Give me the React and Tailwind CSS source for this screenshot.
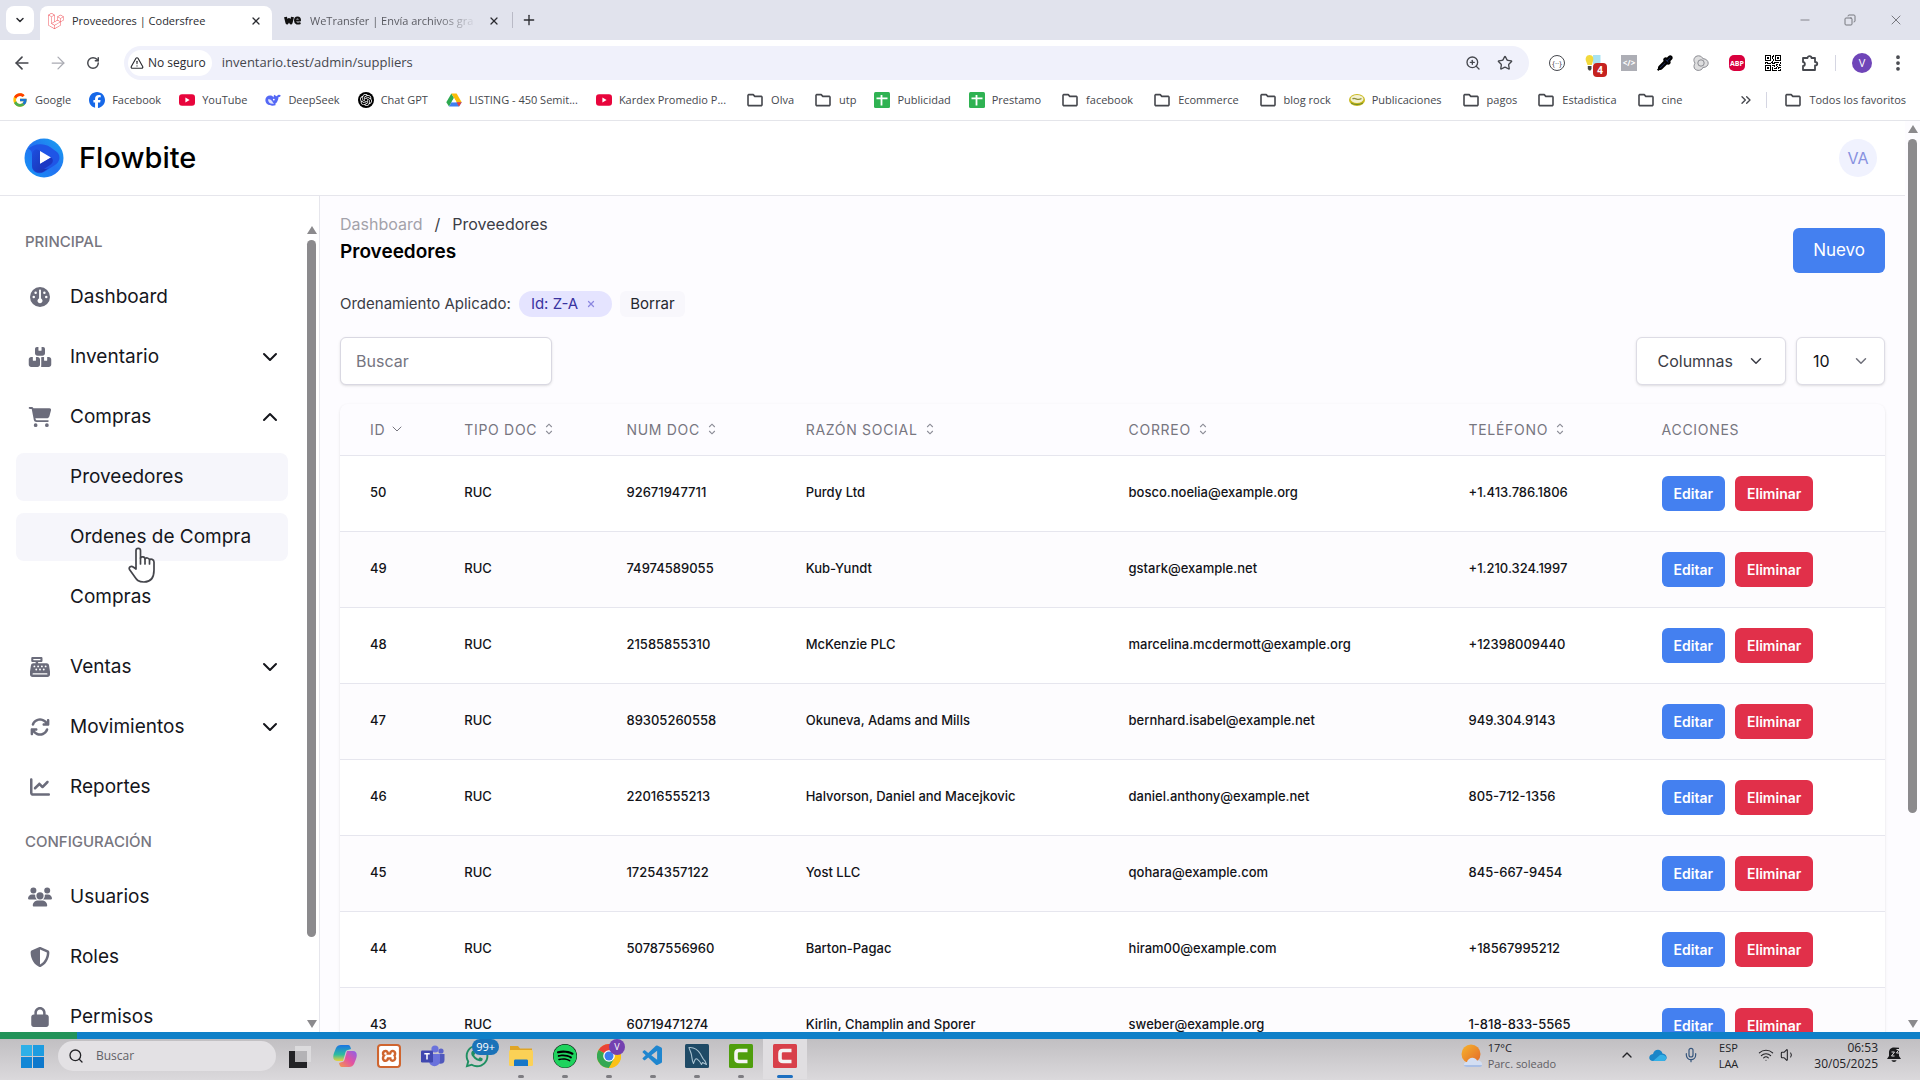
import React from "react";
import {
  FaGauge, FaBoxesStacked, FaCartShopping, FaCashRegister, FaArrowsRotate, FaChartLine,
  FaUsers, FaShieldHalved, FaLock, FaLaravel, FaFacebook, FaSpotify, FaWhatsapp,
} from "react-icons/fa6";
import { FcGoogle } from "react-icons/fc";
import { SiOpenai, SiXampp } from "react-icons/si";
import { BsQrCode } from "react-icons/bs";
import { VscVscode } from "react-icons/vsc";
import {
  ArrowLeft, ArrowRight, RotateCw, X, Plus, ChevronDown, ChevronUp, ChevronsRight, Star, ZoomIn,
  TriangleAlert, EllipsisVertical, Search, Wifi, Volume1, Mic, Pipette, Minus, Copy,
} from "lucide-react";

/* ---------- small drawings ---------- */

const Folder = () => (
  <svg viewBox="0 0 16 16" className="h-4 w-4 shrink-0" fill="none" stroke="#45474d" strokeWidth="1.6" strokeLinejoin="round">
    <path d="M1 3.2 L1.6 2.6 H6.2 L7.8 4.4 H14.4 L15 5 V13 L14.4 13.6 H1.6 L1 13 Z" />
  </svg>
);

const YouTube = () => (
  <svg viewBox="0 0 16 16" className="h-4 w-4 shrink-0">
    <rect x="0" y="2.2" width="16" height="11.6" rx="3" fill="#e8053c" />
    <path d="M6.4 5.6 L10.6 8 L6.4 10.4 Z" fill="#fff" />
  </svg>
);

const DeepSeek = () => (
  <svg viewBox="0 0 16 16" className="h-4 w-4 shrink-0">
    <path
      d="M15.8 3.4c-.5 1-1.2 1.5-2.2 1.5-.3 3.4-1.6 5.6-3.6 7.2l1 .8c-4 1.7-9.6.4-10.5-3.7C-.3 5.5 2.6 3 6 3.6c1 .2 2 .9 2.7 1.8-.2-1.2.1-1.9.9-2.6.6.9 1.3 1.3 2.3 1.4.9-1.3 2.2-1.8 3.9-.8Z"
      fill="#5468f5"
    />
    <path d="M3 7.4c1.8-.7 3.6.4 4.4 2.2.4 1 .9 1.5 1.6 1.8-2.7 1.100-5.900-.7-6-4Z" fill="#dfe4ff" />
    <circle cx="8.8" cy="7.6" r=".9" fill="#fff" />
  </svg>
);

const Drive = () => (
  <svg viewBox="0 0 16 16" className="h-4 w-4 shrink-0">
    <path d="M5.4 1.5 L8 6 L3 14.5 L.3 10.2 Z" fill="#2ca94f" />
    <path d="M5.4 1.5 H10.6 L15.7 10.2 H10.5 Z" fill="#fbbc05" />
    <path d="M3 14.5 L5.5 10.2 H15.7 L13 14.5 Z" fill="#3f7ff0" />
    <path d="M10.5 10.2 H15.7 L13 14.5 Z" fill="#ea4335" />
    <path d="M8 6 L10.5 10.2 H5.5 Z" fill="#fff" />
  </svg>
);

const Sheets = () => (
  <svg viewBox="0 0 16 16" className="h-4 w-4 shrink-0">
    <rect width="16" height="16" rx="1.5" fill="#2fb252" />
    <path d="M7.5 3 V13.5 M2.5 6.3 H13.5" stroke="#fff" strokeWidth="1.8" />
  </svg>
);

const Publi = () => (
  <svg viewBox="0 0 16 16" className="h-4 w-4 shrink-0">
    <ellipse cx="8" cy="8" rx="8" ry="6" fill="#c9b91e" />
    <ellipse cx="8" cy="7" rx="6.5" ry="4" fill="#f4f1d2" />
    <path d="M3.5 7 C6 4.5 8 9.5 12.5 6.5" stroke="#8d8f3a" strokeWidth="1.3" fill="none" />
    <path d="M2 11 C5 13 11 13 14 11" stroke="#6d8a2a" strokeWidth="1" fill="none" />
  </svg>
);

const Logo = () => (
  <svg viewBox="0 0 40 40" className="h-10 w-10">
    <defs>
      <linearGradient id="lg" x1="0" y1="1" x2="1" y2="0">
        <stop offset="0" stopColor="#1598f5" />
        <stop offset=".5" stopColor="#2372f2" />
        <stop offset="1" stopColor="#18a5f0" />
      </linearGradient>
      <linearGradient id="lg2" x1="0" y1="0" x2="1" y2="1">
        <stop offset="0" stopColor="#1c4fe0" />
        <stop offset="1" stopColor="#1a2fae" />
      </linearGradient>
    </defs>
    <circle cx="20" cy="20" r="19.5" fill="url(#lg)" />
    <path d="M4 11 C10 5 20 5 26 9 L33 14 C37 18 36 24 31 27 L20 34 C14 37 8 34 8 28 V16 C8 13 6 11 4 11 Z" fill="#1f55e6" />
    <path d="M8 18 C8 12 12 10 16 13 V26 C16 31 21 32 25 30 L19 34 C13 36 8 33 8 27 Z" fill="url(#lg2)" />
    <path d="M16 13 L27 19.5 L16 26 Z" fill="#fff" />
    <path d="M16 26 L27 19.5 C30 21.5 29 25 26 27 L20 31 C17 31 16 29 16 26 Z" fill="#1b38c4" />
  </svg>
);

const SortBoth = () => (
  <svg viewBox="0 0 10 14" className="h-3 w-2" fill="none" stroke="#8b8c96" strokeWidth="1.4">
    <path d="M1.5 4.5 L5 1 L8.5 4.5 M1.5 9.5 L5 13 L8.5 9.5" />
  </svg>
);

const Hand = () => (
  <svg viewBox="0 0 28 36" className="h-9 w-7" fill="#fff" stroke="#44454b" strokeWidth="1.7" strokeLinejoin="round" strokeLinecap="round">
    <path d="M8 22 V3.5 C8 .6 12.5 .6 12.5 3.5 V11 C13 9.2 17 9.4 17 12 C17.6 10.4 21.3 10.6 21.5 13 C22.5 11.6 26 12.2 26 15 V23 C26 31 22 35 16 35 C10 35 8.5 32.5 6.5 29.5 L1.5 22.5 C.4 20 3.2 18.3 5.2 20 L8 22 Z" />
    <path d="M12.5 11 V17 M17 12 V17 M21.5 13.5 V17" fill="none" />
  </svg>
);

const Chrome = () => (
  <svg viewBox="0 0 24 24" className="h-6 w-6">
    <circle cx="12" cy="12" r="12" fill="#fbc116" />
    <path d="M12 12 L1.6 6 A12 12 0 0 1 22.4 6 Z" fill="#ea4335" />
    <path d="M12 12 L1.6 6 A12 12 0 0 0 12 24 L17 15 Z" fill="#34a853" />
    <path d="M12 12 L22.4 6 A12 12 0 0 1 12 24 L17 15 Z" fill="#fbc116" />
    <circle cx="12" cy="12" r="5.8" fill="#fff" />
    <circle cx="12" cy="12" r="4.5" fill="#3c7df0" />
  </svg>
);

const Copilot = () => (
  <svg viewBox="0 0 24 24" className="h-6 w-6">
    <defs>
      <linearGradient id="cp1" x1="0" y1="0" x2="0" y2="1">
        <stop offset="0" stopColor="#1b74e4" />
        <stop offset=".6" stopColor="#2dbca0" />
        <stop offset="1" stopColor="#e8d23a" />
      </linearGradient>
      <linearGradient id="cp2" x1="1" y1="0" x2="0" y2="1">
        <stop offset="0" stopColor="#8a62ea" />
        <stop offset=".5" stopColor="#e352a0" />
        <stop offset="1" stopColor="#f49a4a" />
      </linearGradient>
    </defs>
    <path d="M8 1 H15 C17 1 17.5 3 18 5 L15 6 C13 6 12.5 8 12 10 L10 17 H4 C0 17 -.5 13 1 9 L3 4 C4 2 5.5 1 8 1 Z" fill="url(#cp1)" />
    <path d="M16 23 H9 C7 23 6.5 21 6 19 L9 18 C11 18 11.5 16 12 14 L14 7 H20 C24 7 24.5 11 23 15 L21 20 C20 22 18.5 23 16 23 Z" fill="url(#cp2)" />
  </svg>
);

const Teams = () => (
  <svg viewBox="0 0 24 24" className="h-6 w-6">
    <circle cx="20" cy="7" r="2.6" fill="#5b62c8" />
    <circle cx="14" cy="5" r="3.6" fill="#6a72dc" />
    <path d="M17 10 H23.5 V16 C23.5 20 19 20.5 17 19 Z" fill="#5058bc" />
    <path d="M8 10 H19 V16.5 C19 24 8 24 8 16.5 Z" fill="#6a72dc" />
    <rect x="0" y="6.5" width="12" height="12" rx="1.2" fill="#4048b0" />
    <path d="M3.3 9.8 H8.7 M6 9.8 V15.5" stroke="#fff" strokeWidth="1.5" />
  </svg>
);

const Explorer = () => (
  <svg viewBox="0 0 24 24" className="h-6 w-6">
    <path d="M1 2 H9 L11 4.5 H23 V12 H1 Z" fill="#e0a526" />
    <rect x="0" y="6" width="24" height="16" rx="1.5" fill="#fbd156" />
    <path d="M5 22 V17 C5 16 5.5 15.5 6.5 15.5 H17.5 C18.5 15.5 19 16 19 17 V22 Z" fill="#1777c8" />
  </svg>
);

const CamC = ({ color }) => (
  <svg viewBox="0 0 24 24" className="h-6 w-6">
    <rect width="24" height="24" rx="1.5" fill={color} />
    <path d="M18.5 6.5 H10 C7.5 6.5 7 7.5 7 9.5 V14.5 C7 16.5 7.5 17.5 10 17.5 H18.5" stroke="#f4f4f4" strokeWidth="3.6" fill="none" />
  </svg>
);

const TaskView = () => (
  <svg viewBox="0 0 24 24" className="h-6 w-6">
    <rect x="8" y="1" width="16" height="16" fill="#dcdbdd" />
    <path d="M2 6 H8 V17 H20 V23 H2 Z" fill="#232326" />
    <rect x="8" y="6" width="12" height="11" fill="#b4b3b6" />
  </svg>
);

const Weather = () => (
  <svg viewBox="0 0 24 24" className="h-6 w-6">
    <defs>
      <linearGradient id="sun" x1="0" y1="0" x2="1" y2="1">
        <stop offset="0" stopColor="#f7b42c" />
        <stop offset="1" stopColor="#e2682a" />
      </linearGradient>
    </defs>
    <circle cx="11" cy="10" r="9.5" fill="url(#sun)" />
    <path d="M7 23 C3 23 3 18 7 18 C8 13 15 12 17 16.5 C22 15.5 24 22 20 23 Z" fill="#d3def2" />
    <path d="M7 23 C5 23 4 22 4 21 H22 C22 22 21 23 20 23 Z" fill="#a9bfe6" />
  </svg>
);

const Bell = () => (
  <svg viewBox="0 0 16 16" className="h-4 w-4">
    <path d="M8 .5 C4.5 .5 3 3 3 5.5 V9 L1 12 H15 L13 9 V.8 Z" fill="#1a1a1c" />
    <path d="M5.5 13.2 H10.5 C10 15.5 6 15.5 5.5 13.2 Z" fill="#1a1a1c" />
    <path d="M5.5 5 H8.5 L5.5 9 H8.5 M10.5 2.5 H13 L10.5 6 H13" stroke="#dcdadd" strokeWidth="1" fill="none" />
  </svg>
);

const Dolphin = () => (
  <svg viewBox="0 0 24 24" className="h-6 w-6">
    <rect width="24" height="24" rx="1.5" fill="#1f4a66" />
    <path
      d="M4 3.5 C9 3 13 6 15.5 10 C17 12.5 17.5 15 20 17 L21.5 20.5 L17.5 18.5 L16.5 20.5 C15 17 14 16.5 12 15 C10 14 9.5 17 8.5 19.5 C7 17 7 14 6.5 11 C6 8 4.5 6 4 3.5 Z"
      fill="none" stroke="#a9c2d0" strokeWidth="1.1" strokeLinejoin="round"
    />
  </svg>
);

/* ---------- browser chrome ---------- */

function TabStrip() {
  return (
    <div className="flex h-10 shrink-0 items-end bg-[#e1e3ed] text-[11px] text-[#2b2c31]">
      <button aria-label="Buscar pestañas" className="mr-1.5 mb-1.5 ml-1.5 grid h-7 w-7 place-items-center rounded-lg bg-white">
        <ChevronDown className="h-3 w-3" strokeWidth={3} />
      </button>
      <div className="flex h-[34px] w-[232px] items-center gap-2 rounded-t-lg bg-white px-2 pb-1">
        <FaLaravel className="h-4 w-4 text-[#f0525a]" />
        <span className="flex-1 truncate">Proveedores | Codersfree</span>
        <button aria-label="Cerrar Proveedores" className="px-0.5"><X className="h-3 w-3" strokeWidth={2.5} /></button>
      </div>
      <div className="flex h-[34px] w-[240px] items-center gap-2 pr-2.5 pb-1 pl-3">
        <svg viewBox="0 0 18 12" className="h-3 w-[18px]" fill="none" stroke="#111" strokeLinejoin="round">
          <path d="M1.5 2 L3 8 L5 4.5 L7 8 L8.5 2" strokeWidth="3" />
          <path d="M11 5.5 H16 C16 1.5 11 1.5 11 5.5 C11 9 14 9 16.5 8" strokeWidth="2" />
        </svg>
        <span className="flex-1 bg-gradient-to-r from-[#55565d] from-75% to-transparent bg-clip-text whitespace-nowrap text-transparent">
          WeTransfer | Envía archivos gra
        </span>
        <button aria-label="Cerrar WeTransfer" className="px-0.5"><X className="h-3 w-3" strokeWidth={2.5} /></button>
      </div>
      <div className="mb-3 h-4 w-px bg-[#b9bac6]" />
      <button aria-label="Nueva pestaña" className="mb-3 ml-2"><Plus className="h-4 w-4" /></button>
      <div className="mr-4 mb-3 ml-auto flex items-center gap-8 text-[#77787f]">
        <button aria-label="Minimizar"><Minus className="h-3.5 w-3.5" strokeWidth={1.5} /></button>
        <button aria-label="Restaurar"><Copy className="h-3 w-3 -scale-x-100" strokeWidth={2} /></button>
        <button aria-label="Cerrar"><X className="h-4 w-4" strokeWidth={1.5} /></button>
      </div>
    </div>
  );
}

function Toolbar() {
  return (
    <div className="flex h-[46px] shrink-0 items-center bg-white px-3 text-[#45474d]">
      <div className="flex w-28 items-center gap-4">
        <button aria-label="Atrás"><ArrowLeft className="h-5 w-5" strokeWidth={2} /></button>
        <button aria-label="Adelante" className="text-[#a9aab2]"><ArrowRight className="h-5 w-5" strokeWidth={1.5} /></button>
        <button aria-label="Recargar" className="pl-0.5"><RotateCw className="h-3.5 w-3.5" strokeWidth={2.5} /></button>
      </div>
      <div className="flex h-[34px] flex-1 items-center rounded-full bg-[#f0f1fb] px-1">
        <button className="flex h-[26px] items-center gap-1 rounded-full bg-white pr-1.5 pl-0.5 text-xs font-medium text-[#2b2c31]">
          <TriangleAlert className="h-3.5 w-3.5" strokeWidth={2} />
          No seguro
        </button>
        <input aria-label="Dirección" defaultValue="inventario.test/admin/suppliers" className="ml-2.5 min-w-0 flex-1 bg-transparent text-[13px] outline-none" />
        <div className="flex gap-4 pr-3">
          <button aria-label="Zoom"><ZoomIn className="h-4 w-4" /></button>
          <button aria-label="Añadir a favoritos"><Star className="h-4 w-4" /></button>
        </div>
      </div>
      <div className="flex items-center gap-5 pl-5">
        <button aria-label="JSON" className="grid h-4 w-4 place-items-center rounded-full border border-[#45474d] text-[8px] leading-none">{"{··}"}</button>
        <button aria-label="Lighthouse" className="relative h-4 w-4">
          <svg viewBox="0 0 16 16" className="h-4 w-4">
            <path d="M8 0 H15.5 V9 H8 Z" fill="#a8e2f2" />
            <path d="M4.5 0 C8 0 9 3 8 6 L6.8 10 H2.5 L1 6 C0 3 1.5 0 4.5 0 Z" fill="#f2d93c" />
            <path d="M2.8 11 H6.5 V14 L5.5 15.5 H4 L2.8 14 Z" fill="#444" />
          </svg>
          <span className="absolute top-2 left-2 grid h-3.5 w-3.5 place-items-center rounded-sm bg-[#c5221f] text-[10px] leading-none font-bold text-white">4</span>
        </button>
        <button aria-label="Código" className="grid h-4 w-4 place-items-center bg-[#adaeb5] text-[8px] font-bold text-white">&lt;/&gt;</button>
        <button aria-label="Cuentagotas"><Pipette className="h-4 w-4 fill-[#1c2a5a] text-black" strokeWidth={3} /></button>
        <button aria-label="Colores">
          <svg viewBox="0 0 16 16" className="h-4 w-4" fill="#dededf" stroke="#8a8b91">
            <path d="M5.5 .8 C8 .8 9.5 2.5 9.8 3.6 C17 4 17 12.5 9.8 12.5 C9 16.5 1 16.5 1 11.5 C1 9.5 2 8.5 2 8 C-.5 5 1.5 .8 5.5 .8 Z" />
            <circle cx="8" cy="8" r="3.2" />
          </svg>
        </button>
        <button aria-label="Adblock Plus">
          <span className="grid h-4 w-4 place-items-center rounded-[5px] bg-[#d9003d] text-[7px] leading-none font-bold text-white">ABP</span>
        </button>
        <button aria-label="QR"><BsQrCode className="h-4 w-4 text-black" /></button>
        <button aria-label="Extensiones">
          <svg viewBox="0 0 18 18" className="h-[18px] w-[18px]" fill="none" stroke="#45474d" strokeWidth="1.8" strokeLinejoin="round">
            <path d="M2 4 H6.5 C6.5 1.5 10.5 1.5 10.5 4 H14 V8 C17 8 17 11.5 14 11.5 V16 H2 V12 C4.5 12 4.5 8 2 8 Z" />
          </svg>
        </button>
      </div>
      <div className="mx-4 h-4 w-px bg-[#d5d6e2]" />
      <button aria-label="Perfil" className="grid h-5 w-5 place-items-center rounded-full bg-[#6f45b8] text-[11px] text-white">V</button>
      <button aria-label="Menú" className="ml-4"><EllipsisVertical className="h-5 w-5" strokeWidth={2.5} /></button>
    </div>
  );
}

const bookmarks = [
  ["Google", <FcGoogle className="h-4 w-4 shrink-0" />],
  ["Facebook", <FaFacebook className="h-4 w-4 shrink-0 text-[#1668e8]" />],
  ["YouTube", <YouTube />],
  ["DeepSeek", <DeepSeek />],
  ["Chat GPT", <span className="grid h-4 w-4 shrink-0 place-items-center rounded-full bg-black"><SiOpenai className="h-3 w-3 text-white" /></span>],
  ["LISTING - 450 Semit...", <Drive />],
  ["Kardex Promedio P...", <YouTube />],
  ["Olva"],
  ["utp"],
  ["Publicidad", <Sheets />],
  ["Prestamo", <Sheets />],
  ["facebook"],
  ["Ecommerce"],
  ["blog rock"],
  ["Publicaciones", <Publi />],
  ["pagos"],
  ["Estadistica"],
  ["cine"],
];

function Bookmarks() {
  return (
    <nav className="flex h-[35px] shrink-0 items-center border-b border-[#e4e5ea] bg-white pr-3.5 pb-1.5 pl-3 text-[11px] whitespace-nowrap text-[#45474d]">
      <div className="flex flex-1 items-center gap-[18px]">
        {bookmarks.map(([t, icon]) =>
          icon ? (
            <a key={t} href="#" className="flex items-center gap-[7px]">{icon}<span>{t}</span></a>
          ) : (
            <a key={t} href="#" className="flex items-center gap-2 pl-[3px]"><Folder /><span>{t}</span></a>
          )
        )}
      </div>
      <button aria-label="Más favoritos"><ChevronsRight className="h-4 w-4" /></button>
      <div className="mx-3 h-4 w-px bg-[#d5d6e2]" />
      <a href="#" className="ml-1.5 flex items-center gap-2"><Folder />Todos los favoritos</a>
    </nav>
  );
}

/* ---------- page ---------- */

function Scrollbar({ thumb }) {
  return (
    <div className="flex w-[15px] shrink-0 flex-col items-center gap-1.5 py-1" aria-hidden="true">
      <svg viewBox="0 0 10 8" className="h-2 w-2.5"><path d="M5 0 L10 8 H0 Z" fill="#8b8a8d" /></svg>
      <div className="flex w-[9px] flex-1 flex-col">
        <div className={`w-full rounded-full bg-[#8b8a8d] ${thumb}`} />
      </div>
      <svg viewBox="0 0 10 8" className="h-2 w-2.5"><path d="M5 8 L10 0 H0 Z" fill="#8b8a8d" /></svg>
    </div>
  );
}

function Item({ icon: Icon, children, chevron, active }) {
  const cls = "flex h-12 w-full items-center rounded-lg pr-1.5 pl-3 text-left " + (active ? "bg-[#f6f6fb]" : "");
  const inner = (
    <>
      <span className="mr-[18px] grid w-6 place-items-center text-[#6b6c7b]">{Icon && <Icon className="h-5 w-6" />}</span>
      <span className="flex-1 whitespace-nowrap">{children}</span>
      {chevron === "down" && <ChevronDown className="h-6 w-6 text-[#15161c]" />}
      {chevron === "up" && <ChevronUp className="h-6 w-6 text-[#15161c]" />}
    </>
  );
  return (
    <li>
      {chevron ? <button className={cls} aria-expanded={chevron === "up"}>{inner}</button> : <a href="#" className={cls}>{inner}</a>}
    </li>
  );
}

const Label = ({ children }) => (
  <li className="flex h-[38px] items-center px-[9px] text-[15px] font-medium text-[#77767f]">{children}</li>
);

function Sidebar() {
  return (
    <aside className="flex w-80 shrink-0 border-r border-[#e6e6ec] bg-white pt-[26px]">
      <nav className="relative min-w-0 flex-1 overflow-hidden px-4 pt-px">
        <ul className="space-y-3 text-[19px] text-[#15161c]">
          <Label>PRINCIPAL</Label>
          <Item icon={FaGauge}>Dashboard</Item>
          <Item icon={FaBoxesStacked} chevron="down">Inventario</Item>
          <Item icon={FaCartShopping} chevron="up">Compras</Item>
          <li>
            <ul className="mb-[22px] space-y-3">
              <Item active>Proveedores</Item>
              <Item active>Ordenes de Compra</Item>
              <Item>Compras</Item>
            </ul>
          </li>
          <Item icon={FaCashRegister} chevron="down">Ventas</Item>
          <Item icon={FaArrowsRotate} chevron="down">Movimientos</Item>
          <Item icon={FaChartLine}>Reportes</Item>
          <Label>CONFIGURACIÓN</Label>
          <Item icon={FaUsers}>Usuarios</Item>
          <Item icon={FaShieldHalved}>Roles</Item>
          <Item icon={FaLock}>Permisos</Item>
        </ul>
        <div className="absolute top-[325px] left-32"><Hand /></div>
      </nav>
      <Scrollbar thumb="h-[90%]" />
    </aside>
  );
}

const rows = [
  [50, "92671947711", "Purdy Ltd", "bosco.noelia@example.org", "+1.413.786.1806"],
  [49, "74974589055", "Kub-Yundt", "gstark@example.net", "+1.210.324.1997"],
  [48, "21585855310", "McKenzie PLC", "marcelina.mcdermott@example.org", "+12398009440"],
  [47, "89305260558", "Okuneva, Adams and Mills", "bernhard.isabel@example.net", "949.304.9143"],
  [46, "22016555213", "Halvorson, Daniel and Macejkovic", "daniel.anthony@example.net", "805-712-1356"],
  [45, "17254357122", "Yost LLC", "qohara@example.com", "845-667-9454"],
  [44, "50787556960", "Barton-Pagac", "hiram00@example.com", "+18567995212"],
  [43, "60719471274", "Kirlin, Champlin and Sporer", "sweber@example.org", "1-818-833-5565"],
];

const heads = ["ID", "TIPO DOC", "NUM DOC", "RAZÓN SOCIAL", "CORREO", "TELÉFONO"];

function SuppliersTable() {
  return (
    <table className="mt-[19px] w-full table-fixed rounded-lg text-left shadow-sm">
      <colgroup>
        <col className="w-[6.1%]" />
        <col className="w-[10.5%]" />
        <col className="w-[11.6%]" />
        <col className="w-[20.9%]" />
        <col className="w-[22%]" />
        <col className="w-[12.5%]" />
        <col />
      </colgroup>
      <thead className="text-[14px] tracking-wider text-[#77767f]">
        <tr className="h-[51px] border-b border-[#e6e6ee]">
          {heads.map((h, i) => (
            <th key={h} className="pl-[30px] font-normal whitespace-nowrap">
              <button className={"flex items-center tracking-wider " + (i === 0 ? "gap-1" : "gap-2")}>
                {h}
                {i === 0 ? <ChevronDown className="h-4 w-4" strokeWidth={1.5} /> : <SortBoth />}
              </button>
            </th>
          ))}
          <th className="pl-[30px] font-normal">ACCIONES</th>
        </tr>
      </thead>
      <tbody className="text-[13px] font-medium text-[#121318]">
        {rows.map(([id, num, name, mail, tel], i) => (
          <tr key={id} className={"h-[76px] border-b border-[#e6e6ee] whitespace-nowrap " + (i % 2 ? "bg-[#fdfcfe]" : "bg-white")}>
            <td className="pl-[30px]">{id}</td>
            <td className="pl-[30px]">RUC</td>
            <td className="pl-[30px]">{num}</td>
            <td className="pl-[30px]">{name}</td>
            <td className="pl-[30px]">{mail}</td>
            <td className="pl-[30px]">{tel}</td>
            <td className="pl-[30px]">
              <div className="flex gap-2.5 text-[14px] font-semibold text-white">
                <button className="h-[35px] rounded-md bg-[#4480f0] px-3">Editar</button>
                <button className="h-[35px] rounded-md bg-[#e1304a] px-3">Eliminar</button>
              </div>
            </td>
          </tr>
        ))}
      </tbody>
    </table>
  );
}

function Page() {
  return (
    <div className="flex min-h-0 flex-1 bg-[#fdfcff] font-['Inter',sans-serif]">
      <div className="flex min-w-0 flex-1 flex-col">
        <header className="flex h-[75px] shrink-0 items-center border-b border-[#e6e6ec] bg-white pr-7 pl-6">
          <Logo />
          <span className="ml-[15px] text-[29px] font-medium text-black">Flowbite</span>
          <button className="ml-auto grid h-[38px] w-[38px] place-items-center rounded-full bg-[#f0f2fe] text-base text-[#8791e0]">VA</button>
        </header>
        <div className="flex min-h-0 flex-1">
          <Sidebar />
          <main className="min-w-0 flex-1 overflow-hidden p-5 pt-4">
            <div className="flex items-start justify-between">
              <div>
                <nav aria-label="Ruta" className="flex h-6 items-center gap-3 text-base text-[#3b3c46]">
                  <a href="#" className="text-[#a3a2aa]">Dashboard</a>
                  <span>/</span>
                  <span>Proveedores</span>
                </nav>
                <h1 className="h-8 text-[19px] leading-8 font-semibold text-black">Proveedores</h1>
              </div>
              <button className="mt-4 h-[45px] rounded-md bg-[#4480f0] px-5 text-[17px] text-white">Nuevo</button>
            </div>
            <div className="mt-[18px] flex h-[26px] items-center text-[15px] text-[#3b3c46]">
              <span className="mr-2">Ordenamiento Aplicado:</span>
              <span className="mr-2 flex h-[26px] items-center rounded-full bg-[#e5e4ff] pr-4 pl-3 text-[#3a33a0]">
                Id: Z-A
                <button aria-label="Quitar orden" className="ml-2"><X className="h-2.5 w-2.5 text-[#8c88e0]" strokeWidth={3} /></button>
              </span>
              <button className="h-[26px] rounded-md bg-[#f8f7fc] px-2.5 text-[#26272f]">Borrar</button>
            </div>
            <div className="mt-5 flex items-center gap-2.5 text-base">
              <input aria-label="Buscar" placeholder="Buscar" className="h-12 w-[212px] rounded-md border border-[#d9d8e2] bg-white px-[15px] text-base shadow-sm outline-none placeholder:text-[#75757f]" />
              <button className="ml-auto flex h-12 items-center gap-3.5 rounded-md border border-[#dddce5] bg-white px-5 text-[#3b3c46] shadow-sm">
                Columnas
                <ChevronDown className="h-[18px] w-[18px]" />
              </button>
              <div className="relative">
                <select aria-label="Filas por página" className="h-12 w-[89px] appearance-none rounded-md border border-[#dddce5] bg-white px-4 text-base text-[#121318] shadow-sm outline-none">
                  <option>10</option>
                  <option>25</option>
                  <option>50</option>
                </select>
                <ChevronDown className="pointer-events-none absolute top-[15px] right-[15px] h-[18px] w-[18px] text-[#6f707a]" />
              </div>
            </div>
            <SuppliersTable />
          </main>
        </div>
      </div>
      <Scrollbar thumb="h-[77%]" />
    </div>
  );
}

/* ---------- taskbar ---------- */

const apps = [
  { name: "Copilot", icon: <Copilot /> },
  { name: "XAMPP", icon: <span className="grid h-6 w-6 place-items-center rounded-sm bg-[#cf652f]"><SiXampp className="h-5 w-5 text-white" /></span> },
  { name: "Teams", icon: <Teams /> },
  { name: "WhatsApp", icon: <FaWhatsapp className="h-[26px] w-[26px] text-[#1f8f62]" />, badge: "99+" },
  { name: "Explorador", icon: <Explorer />, open: true },
  { name: "Spotify", icon: <span className="rounded-full bg-black"><FaSpotify className="h-6 w-6 text-[#1fd35e]" /></span>, open: true },
  { name: "Chrome", icon: <Chrome />, open: true, user: true },
  { name: "VS Code", icon: <VscVscode className="h-6 w-6 text-[#1f86cf]" />, open: true },
  { name: "MySQL Workbench", icon: <Dolphin />, open: true },
  { name: "Camtasia", icon: <CamC color="#4f9e0d" />, open: true },
  { name: "Grabadora", icon: <CamC color="#d8404a" />, current: true },
];

function Taskbar() {
  return (
    <footer className="shrink-0">
      <div className="flex h-[7px]">
        <div className="w-[4%] bg-[#229359]" />
        <div className="flex-1 bg-[#0f80c8]" />
      </div>
      <div className="flex h-[41px] items-start bg-gradient-to-b from-[#c1bfc2] to-[#dbd9dc] text-[11px] text-[#232327]">
        <button aria-label="Inicio" className="mt-1.5 ml-[21px] grid h-[23px] w-[23px] grid-cols-2 gap-px">
          <span className="bg-[#2eb0e8]" /><span className="bg-[#1d9ce0]" /><span className="bg-[#1287d6]" /><span className="bg-[#0d78cc]" />
        </button>
        <label className="mt-0.5 ml-3.5 flex h-[30px] w-[218px] items-center gap-3 rounded-full bg-[#e3e1e4] pl-2.5">
          <Search className="h-4 w-4" />
          <input placeholder="Buscar" aria-label="Buscar en Windows" className="w-36 bg-transparent text-xs outline-none placeholder:text-[#626167]" />
        </label>
        <button aria-label="Vista de tareas" className="mt-1.5 mr-3 ml-[11px]"><TaskView /></button>
        {apps.map((a) => (
          <button key={a.name} aria-label={a.name} className={"relative flex h-10 w-11 flex-col items-center pt-1 " + (a.current ? "bg-[#e0dee1]" : "")}>
            <span className="grid h-[26px] place-items-center">{a.icon}</span>
            {a.badge && <span className="absolute top-0 right-0 rounded-full bg-[#1a72b8] px-1 text-[11px] leading-4 text-white">{a.badge}</span>}
            {a.user && <span className="absolute top-0 right-1.5 grid h-4 w-4 place-items-center rounded-full bg-[#7440b0] text-[9px] text-white">V</span>}
            {a.open && <span className="mt-1.5 h-[3px] w-1.5 rounded-full bg-[#7e7d82]" />}
            {a.current && <span className="mt-1.5 h-[3px] w-4 rounded-full bg-[#1d6fc0]" />}
          </button>
        ))}
        <div className="ml-auto flex items-start pr-[18px] leading-4">
          <span className="mt-[5px]"><Weather /></span>
          <div className="mt-px ml-1 w-[131px]">
            <div>17°C</div>
            <div className="text-[#5f5e64]">Parc. soleado</div>
          </div>
          <ChevronUp className="mt-2 mr-3.5 h-4 w-4" />
          <svg viewBox="0 0 18 12" className="mt-2.5 mr-4 h-3 w-[18px]">
            <path d="M4 12 C-1 12 -1 5.5 4 5 C5 0 12 -1 13.5 4.5 C19 5 19 12 14 12 Z" fill="#1a86c8" />
            <path d="M4 12 L11 6 C15 5 19 8 16.5 11 C16 12 14 12 14 12 Z" fill="#35b0e6" />
          </svg>
          <Mic className="mt-2 mr-5 h-4 w-4 text-[#35557c]" strokeWidth={1.8} />
          <div className="mt-px mr-5 text-center"><div>ESP</div><div>LAA</div></div>
          <Wifi className="mt-2 mr-1.5 h-4 w-4" strokeWidth={1.6} />
          <Volume1 className="mt-2 mr-[18px] h-4 w-4" strokeWidth={1.6} />
          <div className="mt-px mr-2 text-right text-xs leading-4"><div>06:53</div><div>30/05/2025</div></div>
          <span className="mt-2"><Bell /></span>
        </div>
      </div>
    </footer>
  );
}

export default function App() {
  return (
    <div className="flex h-screen flex-col overflow-hidden bg-white font-['Open_Sans','Noto_Sans',sans-serif]">
      <TabStrip />
      <Toolbar />
      <Bookmarks />
      <Page />
      <Taskbar />
    </div>
  );
}
